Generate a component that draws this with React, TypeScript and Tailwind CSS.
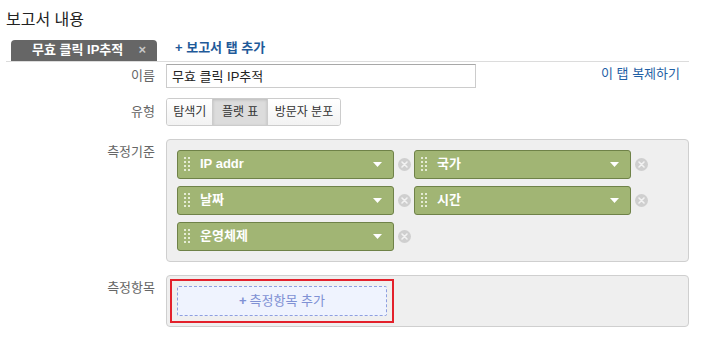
import React from 'react';

const font = { fontFamily: '"Liberation Sans", "Noto Sans CJK KR", sans-serif' };

function Handle() {
  return (
    <svg width="6" height="14" viewBox="0 0 6 14" className="shrink-0">
      {[0, 4, 8, 12].map((y) => (
        <g key={y} fill="#e4ebd4">
          <rect x="0" y={y} width="2" height="2" />
          <rect x="4" y={y} width="2" height="2" />
        </g>
      ))}
    </svg>
  );
}

function RemoveIcon() {
  return (
    <svg width="13" height="13" viewBox="0 0 13 13" className="shrink-0">
      <circle cx="6.5" cy="6.5" r="6.5" fill="#cfcfcf" />
      <path d="M4 4 L9 9 M9 4 L4 9" stroke="#f2f2f2" strokeWidth="1.6" strokeLinecap="round" />
    </svg>
  );
}

function Chip({ label }: { label: string }) {
  return (
    <div className="flex items-center">
      <div className="flex h-[29px] w-[217px] items-center rounded-[3px] border border-[#6f8248] bg-[#a1b574] pl-[6px] pr-[11px]">
        <Handle />
        <span className="ml-[10px] flex-1 text-[13px] font-bold text-white">{label}</span>
        <svg width="9" height="5" viewBox="0 0 9 5">
          <path d="M0 0 L9 0 L4.5 5 Z" fill="#ffffff" />
        </svg>
      </div>
      <div className="flex w-[20px] justify-center">
        <RemoveIcon />
      </div>
    </div>
  );
}

function Row({ label, children, top }: { label: string; children: React.ReactNode; top?: boolean }) {
  return (
    <div className={`flex ${top ? 'items-start' : 'items-center'}`}>
      <div className={`w-[149px] shrink-0 text-right text-[13px] text-[#666] ${top ? 'pt-[3px]' : ''}`}>{label}</div>
      <div className="ml-[11px] flex-1">{children}</div>
    </div>
  );
}

export default function App() {
  const types = [
    { name: '탐색기', w: 'w-[46px]', active: false },
    { name: '플랫 표', w: 'w-[55px]', active: true },
    { name: '방문자 분포', w: 'w-[74px]', active: false },
  ];

  return (
    <div className="h-[338px] w-[702px] bg-white text-[#333]" style={font}>
      <div className="pl-[6px] pr-[13px] pt-[10px]">
        <h2 className="text-[16px] leading-[20px] text-[#222]">보고서 내용</h2>

        {/* tabs */}
        <div className="mt-[8px] flex items-end border-b border-[#dcdcdc]">
          <div className="ml-[5px] flex h-[21px] w-[146px] items-center rounded-t-[4px] bg-[#666] pl-[21px]">
            <span className="text-[13px] font-bold text-white">무효 클릭 IP추적</span>
            <span className="ml-auto mr-[11px] text-[13px] font-bold text-[#c8c8c8]">×</span>
          </div>
          <a className="mb-[3px] ml-[18px] text-[13px] font-bold text-[#1f5a99]">+ 보고서 탭 추가</a>
        </div>

        <div className="mt-[2px] flex flex-col">
          <Row label="이름">
            <div className="flex items-center">
              <input
                readOnly
                value="무효 클릭 IP추적"
                className="h-[24px] w-[310px] border border-[#ccc] border-t-[#a8a8a8] px-[5px] text-[13px] text-[#222] outline-none"
              />
              <a className="ml-auto mr-[9px] -mt-[4px] text-[13px] text-[#1f5fa5]">이 탭 복제하기</a>
            </div>
          </Row>

          <div className="mt-[10px]">
            <Row label="유형">
              <div className="flex h-[28px] w-[175px] overflow-hidden rounded-[3px] border border-[#ccc]">
                {types.map((t, i) => (
                  <div
                    key={t.name}
                    className={`${t.w} flex items-center justify-center text-[12px] text-[#333] ${
                      i > 0 ? 'border-l border-[#ccc]' : ''
                    } ${t.active ? 'bg-[#dcdcdc] shadow-[inset_0_1px_3px_rgba(0,0,0,0.15)]' : 'bg-gradient-to-b from-white to-[#f2f2f2]'}`}
                  >
                    {t.name}
                  </div>
                ))}
              </div>
            </Row>
          </div>

          <div className="mt-[13px]">
            <Row label="측정기준" top>
              <div className="rounded-[4px] border border-[#cfcfcf] bg-[#efefef] p-[10px]">
                <div className="flex flex-col gap-[7px]">
                  <div className="flex">
                    <Chip label="IP addr" />
                    <Chip label="국가" />
                  </div>
                  <div className="flex">
                    <Chip label="날짜" />
                    <Chip label="시간" />
                  </div>
                  <div className="flex">
                    <Chip label="운영체제" />
                  </div>
                </div>
              </div>
            </Row>
          </div>

          <div className="mt-[13px]">
            <Row label="측정항목" top>
              <div className="h-[52px] rounded-[4px] border border-[#cfcfcf] bg-[#efefef] pl-[3px] pt-[3px]">
                <div className="w-[224px] border-2 border-[#e3212b] px-[5px] py-[5px]">
                  <div className="flex h-[30px] items-center justify-center rounded-[2px] border border-dashed border-[#8e9fe0] bg-[#eff3fe] text-[13px] text-[#7f91d4]">
                    <span className="mr-[3px] font-bold">+</span>측정항목 추가
                  </div>
                </div>
              </div>
            </Row>
          </div>
        </div>
      </div>
    </div>
  );
}
